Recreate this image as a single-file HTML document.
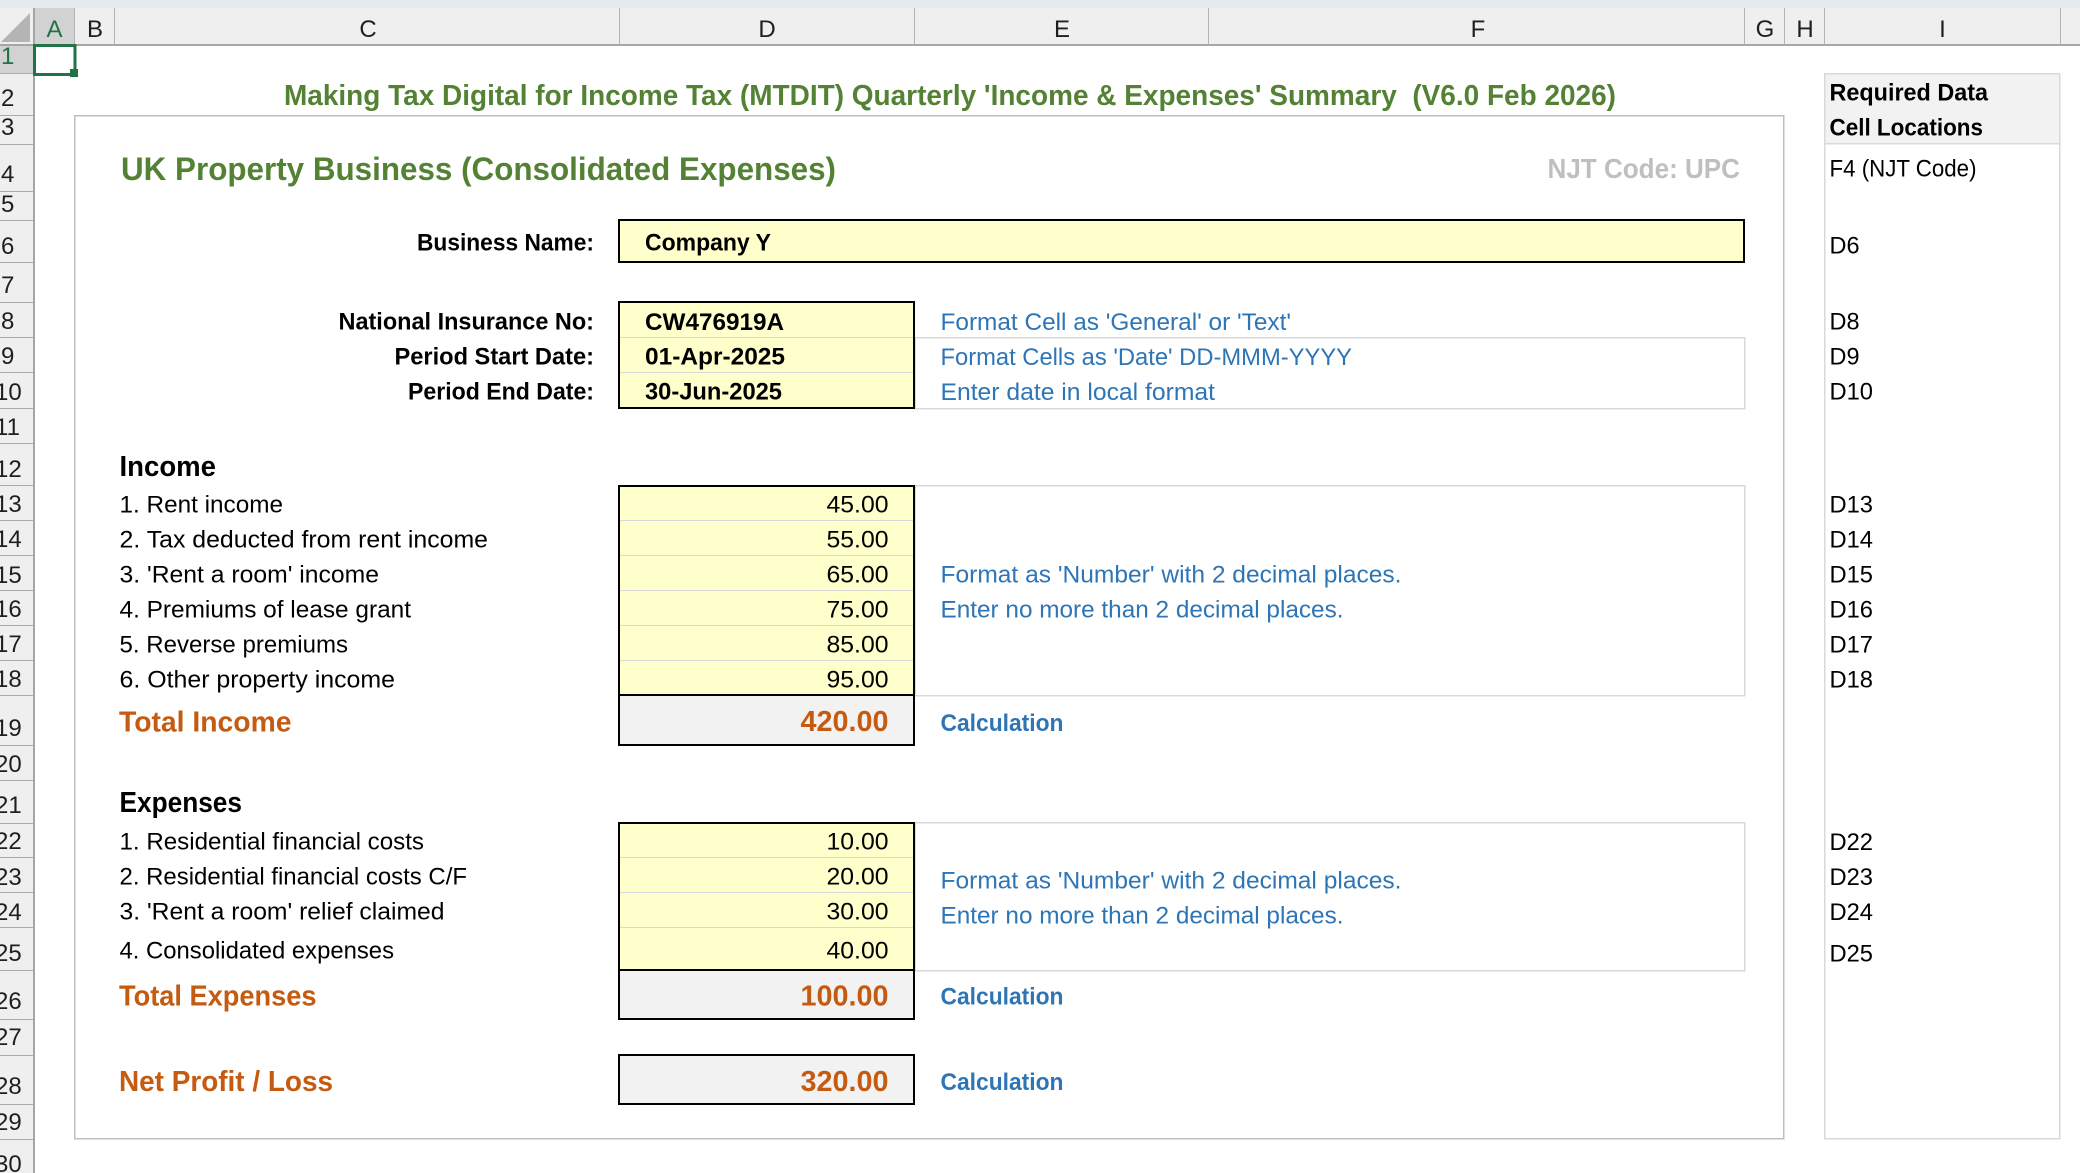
<!DOCTYPE html>
<html lang="en">
<head>
<meta charset="utf-8">
<title>MTDIT Quarterly Summary</title>
<style>
html,body{margin:0;padding:0;background:#fff;width:2080px;height:1173px;overflow:hidden}
svg{display:block}
text{font-family:"Liberation Sans",Arial,sans-serif;font-size:24px;fill:#000;white-space:pre}
.b{font-weight:700}
.h{fill:#1f1f1f}
.blue{fill:#2e75b6}
.or{fill:#c55a11;font-weight:700;font-size:28.5px}
.gr{fill:#548235;font-weight:700}
</style>
</head>
<body>
<svg xmlns="http://www.w3.org/2000/svg" width="2080" height="1173" viewBox="0 0 2080 1173">
<!-- chrome -->
<rect width="2080" height="1173" fill="#fff"/>
<rect width="2080" height="8" fill="#e3ebee"/>
<g shape-rendering="crispEdges">
<rect y="8" width="2080" height="37" fill="#efefef"/>
<rect y="45" width="34" height="1128" fill="#efefef"/>
<rect x="34" y="8" width="41" height="37" fill="#d2d2d2"/>
<rect y="45" width="34" height="28" fill="#d2d2d2"/>
<rect y="44" width="2080" height="2" fill="#a6a6a6"/>
<rect x="33" y="8" width="2" height="1165" fill="#a6a6a6"/>
<g fill="#b4b4b4">
<rect x="74" y="8" width="1" height="37"/><rect x="114" y="8" width="1" height="37"/><rect x="619" y="8" width="1" height="37"/><rect x="914" y="8" width="1" height="37"/><rect x="1208" y="8" width="1" height="37"/><rect x="1744" y="8" width="1" height="37"/><rect x="1784" y="8" width="1" height="37"/><rect x="1824" y="8" width="1" height="37"/><rect x="2060" y="8" width="1" height="37"/>
</g>
<g fill="#ababab">
<rect y="73" width="34" height="1"/><rect y="115" width="34" height="1"/><rect y="144" width="34" height="1"/><rect y="191" width="34" height="1"/><rect y="220" width="34" height="1"/><rect y="262" width="34" height="1"/><rect y="302" width="34" height="1"/><rect y="337" width="34" height="1"/><rect y="372" width="34" height="1"/><rect y="408" width="34" height="1"/><rect y="443" width="34" height="1"/><rect y="485" width="34" height="1"/><rect y="520" width="34" height="1"/><rect y="555" width="34" height="1"/><rect y="590" width="34" height="1"/><rect y="625" width="34" height="1"/><rect y="660" width="34" height="1"/><rect y="695" width="34" height="1"/><rect y="745" width="34" height="1"/><rect y="780" width="34" height="1"/><rect y="823" width="34" height="1"/><rect y="857" width="34" height="1"/><rect y="892" width="34" height="1"/><rect y="927" width="34" height="1"/><rect y="970" width="34" height="1"/><rect y="1019" width="34" height="1"/><rect y="1055" width="34" height="1"/><rect y="1104" width="34" height="1"/><rect y="1139" width="34" height="1"/>
</g>
</g>
<polygon points="30,13 30,42 1,42" fill="#b4b4b4"/>

<!-- column headers -->
<g text-anchor="middle">
<text x="54.5" y="37" style="fill:#217346">A</text>
<text class="h" x="95" y="37">B</text>
<text class="h" x="368" y="37">C</text>
<text class="h" x="767" y="37">D</text>
<text class="h" x="1062" y="37">E</text>
<text class="h" x="1478" y="37">F</text>
<text class="h" x="1765" y="37">G</text>
<text class="h" x="1805" y="37">H</text>
<text class="h" x="1942.5" y="37">I</text>
</g>
<!-- row headers -->
<g>
<text x="1" y="64" style="fill:#217346">1</text>
<text class="h" x="1" y="106">2</text><text class="h" x="1" y="135">3</text><text class="h" x="1" y="182">4</text><text class="h" x="1" y="212">5</text><text class="h" x="1" y="254">6</text><text class="h" x="1" y="293">7</text><text class="h" x="1" y="329">8</text><text class="h" x="1" y="364">9</text>
<text class="h" x="-5" y="400">10</text><text class="h" x="-5" y="435">11</text><text class="h" x="-5" y="477">12</text><text class="h" x="-5" y="512">13</text><text class="h" x="-5" y="547">14</text><text class="h" x="-5" y="583">15</text><text class="h" x="-5" y="617">16</text><text class="h" x="-5" y="652">17</text><text class="h" x="-5" y="687">18</text><text class="h" x="-5" y="736">19</text><text class="h" x="-5" y="772">20</text><text class="h" x="-5" y="813">21</text><text class="h" x="-5" y="849">22</text><text class="h" x="-5" y="885">23</text><text class="h" x="-5" y="920">24</text><text class="h" x="-5" y="961">25</text><text class="h" x="-5" y="1009">26</text><text class="h" x="-5" y="1045">27</text><text class="h" x="-5" y="1094">28</text><text class="h" x="-5" y="1130">29</text><text class="h" x="-5" y="1172">30</text>
</g>

<!-- selected cell -->
<rect x="34.5" y="45.5" width="40.5" height="29" fill="#fff" stroke="#217346" stroke-width="3" shape-rendering="crispEdges"/>
<rect x="70" y="69" width="8" height="8" fill="#217346" shape-rendering="crispEdges"/>

<!-- panels -->
<g shape-rendering="crispEdges">
<rect x="74.5" y="115.5" width="1709" height="1023" fill="none" stroke="#bfbfbf" stroke-width="1.5"/>
<rect x="1824.5" y="73.5" width="235" height="70" fill="#f2f2f2"/>
<rect x="1824.5" y="73.5" width="235" height="1065" fill="none" stroke="#d9d9d9" stroke-width="1.5"/>
<rect x="1824" y="143" width="236" height="1.5" fill="#d9d9d9"/>

<!-- light note boxes -->
<g fill="none" stroke="#d9d9d9" stroke-width="1.5">
<rect x="915" y="337.5" width="829.5" height="71"/>
<rect x="915" y="485.5" width="829.5" height="210"/>
<rect x="915" y="822.5" width="829.5" height="148"/>
</g>

<!-- yellow / grey boxes -->
<rect x="619" y="220" width="1125" height="42" fill="#ffffcc"/>
<rect x="619" y="220" width="1125" height="42" fill="none" stroke="#000" stroke-width="2"/>

<rect x="619" y="302" width="295" height="106" fill="#ffffcc"/>
<rect x="620" y="337" width="293" height="1" fill="#d9d9d9"/><rect x="620" y="372" width="293" height="1" fill="#d9d9d9"/>
<rect x="619" y="302" width="295" height="106" fill="none" stroke="#000" stroke-width="2"/>

<rect x="619" y="486" width="295" height="209" fill="#ffffcc"/>
<rect x="620" y="520" width="293" height="1" fill="#d9d9d9"/><rect x="620" y="555" width="293" height="1" fill="#d9d9d9"/><rect x="620" y="590" width="293" height="1" fill="#d9d9d9"/><rect x="620" y="625" width="293" height="1" fill="#d9d9d9"/><rect x="620" y="660" width="293" height="1" fill="#d9d9d9"/>
<rect x="619" y="486" width="295" height="209" fill="none" stroke="#000" stroke-width="2"/>
<rect x="619" y="695" width="295" height="50" fill="#f2f2f2" stroke="#000" stroke-width="2"/>

<rect x="619" y="823" width="295" height="147" fill="#ffffcc"/>
<rect x="620" y="857" width="293" height="1" fill="#d9d9d9"/><rect x="620" y="892" width="293" height="1" fill="#d9d9d9"/><rect x="620" y="927" width="293" height="1" fill="#d9d9d9"/>
<rect x="619" y="823" width="295" height="147" fill="none" stroke="#000" stroke-width="2"/>
<rect x="619" y="970" width="295" height="49" fill="#f2f2f2" stroke="#000" stroke-width="2"/>
<rect x="619" y="1055" width="295" height="49" fill="#f2f2f2" stroke="#000" stroke-width="2"/>
</g>

<!-- headings -->
<text class="gr" x="284" y="105" style="font-size:29px" textLength="1332" lengthAdjust="spacingAndGlyphs">Making Tax Digital for Income Tax (MTDIT) Quarterly 'Income &amp; Expenses' Summary  (V6.0 Feb 2026)</text>
<text class="gr" x="121" y="180" style="font-size:32px" textLength="715" lengthAdjust="spacingAndGlyphs">UK Property Business (Consolidated Expenses)</text>
<text class="b" x="1547.5" y="178" style="font-size:28px;fill:#bfbfbf" textLength="192.5" lengthAdjust="spacingAndGlyphs">NJT Code: UPC</text>

<!-- labels -->
<g class="b">
<text class="b" x="417" y="250.5" textLength="177" lengthAdjust="spacingAndGlyphs">Business Name:</text>
<text class="b" x="338.5" y="329.5" textLength="255.5" lengthAdjust="spacingAndGlyphs">National Insurance No:</text>
<text class="b" x="394.5" y="364.5" textLength="199.5" lengthAdjust="spacingAndGlyphs">Period Start Date:</text>
<text class="b" x="408" y="399.5" textLength="186" lengthAdjust="spacingAndGlyphs">Period End Date:</text>
<text class="b" x="645" y="250.5" textLength="126" lengthAdjust="spacingAndGlyphs">Company Y</text>
<text class="b" x="645" y="330" textLength="139" lengthAdjust="spacingAndGlyphs">CW476919A</text>
<text class="b" x="645" y="364.5" textLength="140" lengthAdjust="spacingAndGlyphs">01-Apr-2025</text>
<text class="b" x="645" y="399.5" textLength="137" lengthAdjust="spacingAndGlyphs">30-Jun-2025</text>
</g>

<!-- income -->
<text class="b" x="119.5" y="476" style="font-size:28.5px" textLength="96.5" lengthAdjust="spacingAndGlyphs">Income</text>
<text x="119.5" y="512.5" textLength="163.5" lengthAdjust="spacingAndGlyphs">1. Rent income</text>
<text x="119.5" y="547.5" textLength="368.5" lengthAdjust="spacingAndGlyphs">2. Tax deducted from rent income</text>
<text x="119.5" y="582.5" textLength="259.5" lengthAdjust="spacingAndGlyphs">3. 'Rent a room' income</text>
<text x="119.5" y="617.5" textLength="291.5" lengthAdjust="spacingAndGlyphs">4. Premiums of lease grant</text>
<text x="119.5" y="652.5" textLength="228.5" lengthAdjust="spacingAndGlyphs">5. Reverse premiums</text>
<text x="119.5" y="687.5" textLength="275.5" lengthAdjust="spacingAndGlyphs">6. Other property income</text>
<text class="or" x="119" y="731.5" textLength="172.5" lengthAdjust="spacingAndGlyphs">Total Income</text>

<text x="826.5" y="512.5" textLength="62" lengthAdjust="spacingAndGlyphs">45.00</text>
<text x="826.5" y="547.5" textLength="62" lengthAdjust="spacingAndGlyphs">55.00</text>
<text x="826.5" y="582.5" textLength="62" lengthAdjust="spacingAndGlyphs">65.00</text>
<text x="826.5" y="617.5" textLength="62" lengthAdjust="spacingAndGlyphs">75.00</text>
<text x="826.5" y="652.5" textLength="62" lengthAdjust="spacingAndGlyphs">85.00</text>
<text x="826.5" y="687.5" textLength="62" lengthAdjust="spacingAndGlyphs">95.00</text>
<text class="or" x="800.5" y="731" textLength="88" lengthAdjust="spacingAndGlyphs">420.00</text>

<!-- expenses -->
<text class="b" x="119.5" y="812" style="font-size:28.5px" textLength="122.5" lengthAdjust="spacingAndGlyphs">Expenses</text>
<text x="119.5" y="849.5" textLength="304.5" lengthAdjust="spacingAndGlyphs">1. Residential financial costs</text>
<text x="119.5" y="884.5" textLength="347.5" lengthAdjust="spacingAndGlyphs">2. Residential financial costs C/F</text>
<text x="119.5" y="919.5" textLength="325" lengthAdjust="spacingAndGlyphs">3. 'Rent a room' relief claimed</text>
<text x="119.5" y="958.5" textLength="274.5" lengthAdjust="spacingAndGlyphs">4. Consolidated expenses</text>
<text class="or" x="119" y="1005.5" textLength="197.5" lengthAdjust="spacingAndGlyphs">Total Expenses</text>
<text class="or" x="119" y="1091" textLength="214" lengthAdjust="spacingAndGlyphs">Net Profit / Loss</text>

<text x="826.5" y="849.5" textLength="62" lengthAdjust="spacingAndGlyphs">10.00</text>
<text x="826.5" y="884.5" textLength="62" lengthAdjust="spacingAndGlyphs">20.00</text>
<text x="826.5" y="919.5" textLength="62" lengthAdjust="spacingAndGlyphs">30.00</text>
<text x="826.5" y="958.5" textLength="62" lengthAdjust="spacingAndGlyphs">40.00</text>
<text class="or" x="800.5" y="1005.5" textLength="88" lengthAdjust="spacingAndGlyphs">100.00</text>
<text class="or" x="800.5" y="1091" textLength="88" lengthAdjust="spacingAndGlyphs">320.00</text>

<!-- notes -->
<text class="blue" x="940.5" y="330" textLength="350.5" lengthAdjust="spacingAndGlyphs">Format Cell as 'General' or 'Text'</text>
<text class="blue" x="940.5" y="365" textLength="411.5" lengthAdjust="spacingAndGlyphs">Format Cells as 'Date' DD-MMM-YYYY</text>
<text class="blue" x="940.5" y="400" textLength="274.5" lengthAdjust="spacingAndGlyphs">Enter date in local format</text>
<text class="blue" x="940.5" y="582.5" textLength="461" lengthAdjust="spacingAndGlyphs">Format as 'Number' with 2 decimal places.</text>
<text class="blue" x="940.5" y="617.5" textLength="403" lengthAdjust="spacingAndGlyphs">Enter no more than 2 decimal places.</text>
<text class="blue" x="940.5" y="888.5" textLength="461" lengthAdjust="spacingAndGlyphs">Format as 'Number' with 2 decimal places.</text>
<text class="blue" x="940.5" y="923.5" textLength="403" lengthAdjust="spacingAndGlyphs">Enter no more than 2 decimal places.</text>
<text class="blue b" x="940.5" y="731" textLength="123" lengthAdjust="spacingAndGlyphs">Calculation</text>
<text class="blue b" x="940.5" y="1004.5" textLength="123" lengthAdjust="spacingAndGlyphs">Calculation</text>
<text class="blue b" x="940.5" y="1090" textLength="123" lengthAdjust="spacingAndGlyphs">Calculation</text>

<!-- right column -->
<text class="b" x="1829.5" y="100.5" textLength="158.5" lengthAdjust="spacingAndGlyphs">Required Data</text>
<text class="b" x="1829.5" y="135.5" textLength="153.5" lengthAdjust="spacingAndGlyphs">Cell Locations</text>
<text x="1829.5" y="176.5" textLength="147" lengthAdjust="spacingAndGlyphs">F4 (NJT Code)</text>
<text x="1829.5" y="253.5" textLength="30" lengthAdjust="spacingAndGlyphs">D6</text>
<text x="1829.5" y="329.5" textLength="30" lengthAdjust="spacingAndGlyphs">D8</text>
<text x="1829.5" y="364.5" textLength="30" lengthAdjust="spacingAndGlyphs">D9</text>
<text x="1829.5" y="399.5" textLength="43.5" lengthAdjust="spacingAndGlyphs">D10</text>
<text x="1829.5" y="512.5" textLength="43.5" lengthAdjust="spacingAndGlyphs">D13</text>
<text x="1829.5" y="547.5" textLength="43.5" lengthAdjust="spacingAndGlyphs">D14</text>
<text x="1829.5" y="582.5" textLength="43.5" lengthAdjust="spacingAndGlyphs">D15</text>
<text x="1829.5" y="617.5" textLength="43.5" lengthAdjust="spacingAndGlyphs">D16</text>
<text x="1829.5" y="652.5" textLength="43.5" lengthAdjust="spacingAndGlyphs">D17</text>
<text x="1829.5" y="687.5" textLength="43.5" lengthAdjust="spacingAndGlyphs">D18</text>
<text x="1829.5" y="850" textLength="43.5" lengthAdjust="spacingAndGlyphs">D22</text>
<text x="1829.5" y="885" textLength="43.5" lengthAdjust="spacingAndGlyphs">D23</text>
<text x="1829.5" y="920" textLength="43.5" lengthAdjust="spacingAndGlyphs">D24</text>
<text x="1829.5" y="961.5" textLength="43.5" lengthAdjust="spacingAndGlyphs">D25</text>
</svg>
</body>
</html>
